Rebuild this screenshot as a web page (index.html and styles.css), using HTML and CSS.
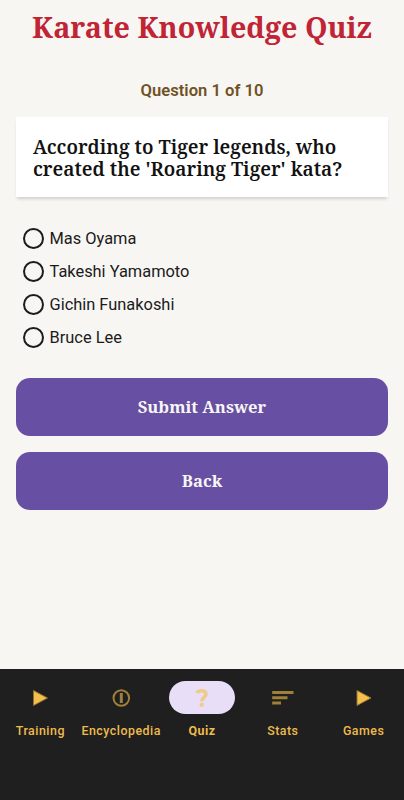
FILE: index.html
```html
<!DOCTYPE html>
<html lang="en">
<head>
  <meta charset="UTF-8">
  <meta name="viewport" content="width=device-width, initial-scale=1.0">
  <title>Karate Knowledge Quiz</title>
  <link rel="stylesheet" href="styles.css">
</head>
<body>
  <main class="quiz">
    <h1 class="quiz-title">Karate Knowledge Quiz</h1>
    <p class="progress">Question 1 of 10</p>

    <h2 class="question">
      According to Tiger legends, who<br>
      created the 'Roaring Tiger' kata?
    </h2>

    <form class="answers">
      <label class="answer"><input type="radio" name="answer" value="1">Mas Oyama</label>
      <label class="answer"><input type="radio" name="answer" value="2">Takeshi Yamamoto</label>
      <label class="answer"><input type="radio" name="answer" value="3">Gichin Funakoshi</label>
      <label class="answer"><input type="radio" name="answer" value="4">Bruce Lee</label>
    </form>

    <div class="actions">
      <button class="btn" type="button">Submit Answer</button>
      <button class="btn" type="button">Back</button>
    </div>
  </main>

  <nav class="tabs">
    <a class="tab">
      <span class="tab-icon">
        <svg width="24" height="24" viewBox="0 0 24 24"><path d="M5.500 4.500v15L19.500 12z" fill="#f5c04a" stroke="#8f7233" stroke-width="1"/></svg>
      </span>
      Training
    </a>
    <a class="tab">
      <span class="tab-icon">
        <svg width="24" height="24" viewBox="0 0 24 24" fill="none" stroke="#a07f38"><circle cx="12.300" cy="12" r="7.800" stroke-width="2"/><path d="M12.300 7v10" stroke-width="3"/></svg>
      </span>
      Encyclopedia
    </a>
    <a class="tab active">
      <span class="tab-icon">
        <svg width="24" height="24" viewBox="0 0 24 24" fill="none" stroke="#efca8b" stroke-width="3.600"><path d="M7 7C8.500 3.800 16 4 16 8.300C16 11.300 11.700 11.200 11.700 15.600"/><path d="M11.700 17v3.600" stroke-width="4"/></svg>
      </span>
      Quiz
    </a>
    <a class="tab">
      <span class="tab-icon">
        <svg width="24" height="24" viewBox="0 0 24 24" fill="#a07f38"><path d="M1.200 5H22.500v3H1.200zM1.200 10.300H16.500v3H1.200zM1.200 15.500h8.800v3h-8.800z"/></svg>
      </span>
      Stats
    </a>
    <a class="tab">
      <span class="tab-icon">
        <svg width="24" height="24" viewBox="0 0 24 24"><path d="M5 4.500v15L19 12z" fill="#f5c04a" stroke="#8f7233" stroke-width="1"/></svg>
      </span>
      Games
    </a>
  </nav>
</body>
</html>
```

FILE: styles.css
```css
* {
  box-sizing: border-box;
}

body {
  margin: 0;
  height: 100vh;
  display: flex;
  flex-direction: column;
  background-color: #f8f6f3;
  color: #1b1b1b;
  font-family: Roboto, sans-serif;
  overflow: hidden;
}

.quiz {
  flex: 1;
  padding: 7px 16px 0;
}

.quiz-title {
  margin: 0;
  color: #c02435;
  font-family: "Noto Serif", "DejaVu Serif Condensed", "DejaVu Serif", serif;
  font-size: 28.700px;
  line-height: 40px;
  font-weight: bold;
  text-align: center;
  white-space: nowrap;
}

.progress {
  margin: 34px 0 0;
  color: #6f5224;
  font-size: 16.600px;
  line-height: 20px;
  font-weight: 600;
  text-align: center;
}

.question {
  margin: 16px 0 0;
  height: 80px;
  padding: 19px 17px;
  background-color: #fff;
  color: #111;
  box-shadow: 0 3px 3px -1px rgba(0, 0, 0, 0.16);
  font-family: "Noto Serif", "DejaVu Serif Condensed", "DejaVu Serif", serif;
  font-size: 19.200px;
  line-height: 22px;
  font-weight: 600;
  white-space: nowrap;
}

.answers {
  margin: 25px 0 0 6.500px;
}

.answer {
  display: flex;
  align-items: center;
  height: 33px;
  font-size: 16.400px;
}

.answer input {
  appearance: none;
  width: 21px;
  height: 21px;
  margin: 0 6px 0 0;
  border: 2px solid #1d1b20;
  border-radius: 50%;
}

.actions {
  display: flex;
  flex-direction: column;
  gap: 16px;
  margin-top: 24px;
}

.btn {
  height: 58px;
  padding: 0 0 2px;
  border: none;
  border-radius: 14px;
  background-color: #674fa3;
  color: #f8f6f3;
  font-family: "Noto Serif", "DejaVu Serif Condensed", "DejaVu Serif", serif;
  font-size: 16.600px;
  font-weight: bold;
}

/* Bottom navigation */
.tabs {
  display: grid;
  grid-template-columns: repeat(5, 1fr);
  height: 131px;
  padding-top: 12px;
  background-color: #1f1f1f;
}

.tab {
  display: flex;
  flex-direction: column;
  align-items: center;
  gap: 8px;
  color: #eebb4d;
  font-size: 12.400px;
  line-height: 18px;
  font-weight: 500;
  letter-spacing: 0.5px;
}

.tab-icon {
  display: flex;
  align-items: center;
  justify-content: center;
  width: 66px;
  height: 33px;
  border-radius: 17px;
}

.active {
  font-weight: 700;
}

.active .tab-icon {
  background-color: #e8def8;
}
```
